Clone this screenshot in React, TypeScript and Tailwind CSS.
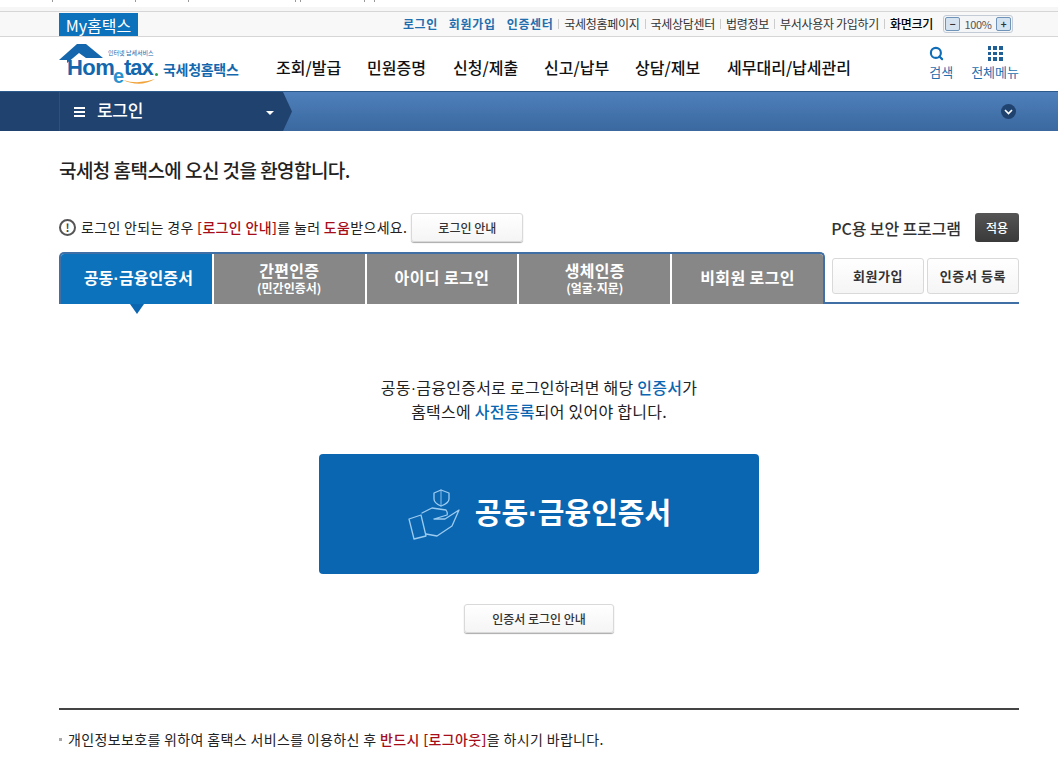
import { Search } from "lucide-react"

const font = "font-['Noto_Sans_CJK_KR','Liberation_Sans',sans-serif]"

const menus = [
  { label: "조회/발급", cls: "w-[91px]" },
  { label: "민원증명", cls: "w-[86px]" },
  { label: "신청/제출", cls: "w-[91px]" },
  { label: "신고/납부", cls: "w-[91px]" },
  { label: "상담/제보", cls: "w-[92px]" },
  { label: "세무대리/납세관리", cls: "w-[150px]" },
]

const utilLinks = ["국세청홈페이지", "국세상담센터", "법령정보", "부서사용자 가입하기"]

// the CJK font's middle dot is full width, the reference has a narrow one
function Dot() {
  return <span className="font-['Liberation_Sans',sans-serif] leading-[0]">·</span>
}

function HometaxLogo() {
  return (
    <div className="relative h-[46px] w-[180px] shrink-0">
      <svg className="absolute left-0 top-0" width="60" height="32" viewBox="0 0 60 32">
        <path d="M1 16 L19 0 L28 0 L45 14 L28 14 L21 9 L9 19 L9 16 Z" fill="#1467ad" />
      </svg>
      <span className="absolute left-[9px] top-[11px] font-['Liberation_Sans',sans-serif] text-[22px] font-bold leading-[26px] tracking-[-0.6px] text-[#1467ad]">
        Hom
      </span>
      <span className="absolute left-[55px] top-[20px] font-['Liberation_Sans',sans-serif] text-[20px] font-bold leading-[24px] text-[#2a93cf]">
        e
      </span>
      <span className="absolute left-[66px] top-[11px] font-['Liberation_Sans',sans-serif] text-[22px] font-bold leading-[26px] tracking-[-1px] text-[#1467ad]">
        tax
      </span>
      <span className="absolute left-[50px] top-[5px] whitespace-nowrap text-[6px] leading-[8px] text-[#1467ad]">인터넷 납세서비스</span>
      <svg className="absolute left-[64px] top-[35px]" width="34" height="8" viewBox="0 0 34 8">
        <path d="M1 1 Q16 6 33 0 Q18 9 1 1 Z" fill="#f2a33a" />
      </svg>
      <span className="absolute left-[97px] top-[29px] h-[3px] w-[3px] rounded-full bg-[#2f9e54]" />
      <span className="absolute left-[105px] top-[14px] whitespace-nowrap text-[14px] font-bold leading-[22px] tracking-[-0.3px] text-[#1467ad]">
        국세청홈택스
      </span>
    </div>
  )
}

function CertHand() {
  return (
    <svg width="54" height="52" viewBox="0 0 54 52" fill="none" stroke="#9ccbf0" strokeWidth="1.3" strokeLinejoin="round" strokeLinecap="round">
      <path d="M34 2 L42 5 L42 11 Q42 15 34 18 Q27 15 27 11 L27 5 Z" />
      <path d="M34 2 L34 18" strokeWidth="0.9" />
      <path d="M2 31 L14 27 L19 48 L7 51 Z" />
      <path d="M15 25 L25 20 L39 22 Q41 25 40 27 L27 31 M27 31 L38 31 L52 22 L45 38 L30 48 L19 46" />
    </svg>
  )
}

function LightButton({ label, cls }: { label: string; cls: string }) {
  return (
    <button className={`flex items-center justify-center rounded-[3px] border border-[#d9d9d9] bg-gradient-to-b from-white to-[#f5f5f5] text-[12px] font-medium text-[#333] shadow-[0_1px_1px_#aaa] ${cls}`}>
      {label}
    </button>
  )
}

export default function App() {
  return (
    <div className={`${font} h-[763px] w-[1058px] overflow-hidden bg-white text-[#222]`}>
      {/* cut off edge of the previous page */}
      <div className="h-[11px] bg-gradient-to-b from-white from-60% to-[#f6f6f6] to-60%">
        <div className="flex pl-[52px]">
          <i className="h-[2px] w-px bg-[#999]" />
          <i className="ml-[82px] h-[2px] w-px bg-[#999]" />
          <i className="ml-[52px] h-[2px] w-px bg-[#999]" />
          <i className="ml-[106px] h-[2px] w-px bg-[#999]" />
          <i className="ml-[4px] h-[2px] w-px bg-[#999]" />
          <i className="ml-[63px] h-[2px] w-px bg-[#999]" />
          <i className="ml-[9px] h-[2px] w-px bg-[#999]" />
        </div>
      </div>

      {/* util bar */}
      <div className="h-[26px] border-y border-[#d6d6d6] bg-[#f8f8f8] pl-[59px] pr-[45px]">
        <div className="flex h-[24px] items-center justify-between">
          <a className="mt-[1px] flex h-[23px] w-[79px] items-center justify-center bg-[#0b72bb] text-[16px] leading-none text-white">My홈택스</a>
          <div className="flex items-center text-[12px] tracking-[-0.3px] text-[#333]">
            <span className="font-bold tracking-[0.6px] text-[#1f6fae]">로그인</span>
            <span className="ml-[11px] font-bold tracking-[0.7px] text-[#1f6fae]">회원가입</span>
            <span className="ml-[11px] font-bold tracking-[0.6px] text-[#1f6fae]">인증센터</span>
            {utilLinks.map((link) => (
              <span key={link} className="flex items-center">
                <i className="mx-[5px] h-[10px] w-px bg-[#ccc]" />
                {link}
              </span>
            ))}
            <i className="mx-[5px] h-[10px] w-px bg-[#ccc]" />
            <span className="font-medium text-black">화면크기</span>
            <div className="ml-[10px] flex h-[18px] w-[70px] items-center justify-between rounded-[3px] border border-[#c3ccd6] bg-[#f3f5f7] px-[1px] text-[11px]">
              <span className="flex h-[14px] w-[15px] items-center justify-center rounded-[2px] border border-[#6f94b8] bg-[#d5e3f0] text-[10px] font-bold leading-none">−</span>
              <span className="text-[#555]">100%</span>
              <span className="flex h-[14px] w-[15px] items-center justify-center rounded-[2px] border border-[#6f94b8] bg-[#d5e3f0] text-[10px] font-bold leading-none">+</span>
            </div>
          </div>
        </div>
      </div>

      {/* header */}
      <div className="flex h-[54px] items-start pl-[58px] pr-[39px]">
        <div className="mt-[7px]">
          <HometaxLogo />
        </div>
        <nav className="ml-[38px] mt-[18px] flex items-center">
          {menus.map((m) => (
            <a key={m.label} className={`${m.cls} whitespace-nowrap text-[16px] font-medium leading-[24px] tracking-[0px] text-[#111]`}>
              {m.label}
            </a>
          ))}
        </nav>
        <div className="ml-auto flex items-start gap-[18px] pt-[9px] text-[13px] text-[#1f6fae]">
          <a className="flex flex-col items-center leading-[18px]">
            <Search size={15} strokeWidth={3.4} className="mb-[2px] -translate-x-[5px] text-[#0f6cb6]" />
            검색
          </a>
          <a className="flex flex-col items-center leading-[18px]">
            <span className="mb-[2px] grid h-[15px] w-[15px] grid-cols-3 gap-[2px]">
              {[0, 1, 2, 3, 4, 5, 6, 7, 8].map((n) => (
                <i key={n} className="bg-[#1f5f96]" />
              ))}
            </span>
            전체메뉴
          </a>
        </div>
      </div>

      {/* lnb */}
      <div className="flex h-[40px] items-center border-t border-[#2d5a8c] bg-gradient-to-b from-[#4f80bb] to-[#3a689f] pr-[42px]">
        <div className="flex h-full w-[292px] items-center bg-[#20426f] pl-[59px] [clip-path:polygon(0_0,283px_0,292px_50%,283px_100%,0_100%)]">
          <div className="flex h-full w-[215px] items-center border-l border-[#2c5080] pl-[14px] text-white">
            <span className="flex h-[10px] w-[11px] flex-col justify-between">
              <i className="h-[2px] bg-white" />
              <i className="h-[2px] bg-white" />
              <i className="h-[2px] bg-white" />
            </span>
            <span className="ml-[12px] -translate-y-[2px] text-[17px] font-medium leading-none tracking-[-0.3px]">로그인</span>
            <span className="ml-auto mt-[3px] h-0 w-0 border-x-[4px] border-t-[4px] border-x-transparent border-t-white" />
          </div>
        </div>
        <span className="ml-auto flex h-[15px] w-[15px] items-center justify-center rounded-full bg-[#20426f]">
          <svg width="9" height="6" viewBox="0 0 9 6" fill="none" stroke="#fff" strokeWidth="1.6">
            <path d="M1 1 L4.5 4.5 L8 1" />
          </svg>
        </span>
      </div>

      {/* content */}
      <main className="px-[59px] pr-[39px]">
        <h1 className="mt-[25px] text-[19px] font-medium leading-[28px] tracking-[-0.55px] text-[#222]">
          국세청 홈택스에 오신 것을 환영합니다.
        </h1>

        <div className="mt-[29px] flex h-[29px] items-center">
          <span className="flex h-[17px] w-[17px] items-center justify-center rounded-full border-2 border-[#555] text-[11px] font-bold leading-none text-[#444]">!</span>
          <p className="ml-[5px] whitespace-nowrap text-[14px] tracking-[0.33px]">
            로그인 안되는 경우 <b className="font-medium text-[#a50e19]">[로그인 안내]</b>를 눌러 <b className="font-medium text-[#a50e19]">도움</b>받으세요.
          </p>
          <LightButton label="로그인 안내" cls="ml-[4px] h-[29px] w-[112px] shrink-0" />
          <span className="ml-auto mt-[1px] whitespace-nowrap text-[16px] font-medium tracking-[-0.1px] text-[#333]">PC용 보안 프로그램</span>
          <button className="ml-[14px] h-[29px] w-[44px] shrink-0 rounded-[3px] bg-gradient-to-b from-[#555] to-[#3a3a3a] text-[12px] font-medium text-white">적용</button>
        </div>

        {/* tabs */}
        <div className="relative mt-[10px] flex h-[52px] items-stretch border-b-2 border-[#3f6fa5]">
          <div className="-mb-[2px] flex w-[766px] gap-[2px] rounded-t-[5px] border-x-2 border-t-2 border-[#3f6fa5] bg-white">
            <a className="flex flex-1 items-center justify-center rounded-tl-[3px] bg-[#0b72bb] pb-[5px] text-[16px] font-bold tracking-[0.1px] text-white">
              <span className="translate-x-[2px]">공동<Dot />금융인증서</span>
            </a>
            <a className="flex flex-1 flex-col items-center justify-center bg-[#878787] pb-[3px] text-[16px] font-bold leading-[20px] tracking-[0.3px] text-white">
              간편인증
              <span className="text-[12px] leading-[16px] tracking-[0px]">(민간인증서)</span>
            </a>
            <a className="flex flex-1 items-center justify-center bg-[#878787] pb-[5px] text-[16px] font-bold tracking-[0.4px] text-white">아이디 로그인</a>
            <a className="flex flex-1 flex-col items-center justify-center bg-[#878787] pb-[3px] text-[16px] font-bold leading-[20px] tracking-[0.3px] text-white">
              생체인증
              <span className="text-[12px] leading-[16px] tracking-[0px]">(얼굴<Dot />지문)</span>
            </a>
            <a className="flex flex-1 items-center justify-center rounded-tr-[3px] bg-[#878787] pb-[5px] text-[16px] font-bold tracking-[0.4px] text-white">비회원 로그인</a>
          </div>
          <div className="ml-[7px] mt-[6px] flex h-[36px] gap-[3px]">
            <LightButton label="회원가입" cls="w-[92px] !shadow-none !text-[13px] !font-bold tracking-[0.6px]" />
            <LightButton label="인증서 등록" cls="w-[92px] !shadow-none !text-[13px] !font-bold tracking-[0.6px]" />
          </div>
          <i className="absolute left-[71px] top-[52px] h-0 w-0 border-x-[7px] border-t-[10px] border-x-transparent border-t-[#0b66b1]" />
        </div>

        <div className="flex flex-col items-center">
          <p className="mt-[71px] text-center text-[16px] leading-[24px] tracking-[0.25px] text-[#222]">
            공동<Dot />금융인증서로 로그인하려면 해당 <b className="font-medium text-[#0b66b1]">인증서</b>가
            <br />
            홈택스에 <b className="font-medium text-[#0b66b1]">사전등록</b>되어 있어야 합니다.
          </p>
          <button className="mt-[31px] flex h-[120px] w-[440px] items-center justify-center gap-[14px] rounded-[4px] bg-[#0b66b1] text-[29px] font-bold text-white">
            <CertHand />
            <span className="-translate-y-[2px]">공동<Dot />금융인증서</span>
          </button>
          <LightButton label="인증서 로그인 안내" cls="mt-[30px] h-[29px] w-[150px]" />
        </div>

        <div className="mt-[75px] h-[2px] bg-[#444]" />
        <p className="mt-[19px] flex items-center whitespace-nowrap text-[14px] leading-[20px] tracking-[0.35px] text-[#222]">
          <i className="mr-[6px] h-[3px] w-[3px] bg-[#aaa]" />
          개인정보보호를 위하여 홈택스 서비스를 이용하신 후&nbsp;<b className="font-medium text-[#a50e19]">반드시 [로그아웃]</b>을 하시기 바랍니다.
        </p>
      </main>
    </div>
  )
}
